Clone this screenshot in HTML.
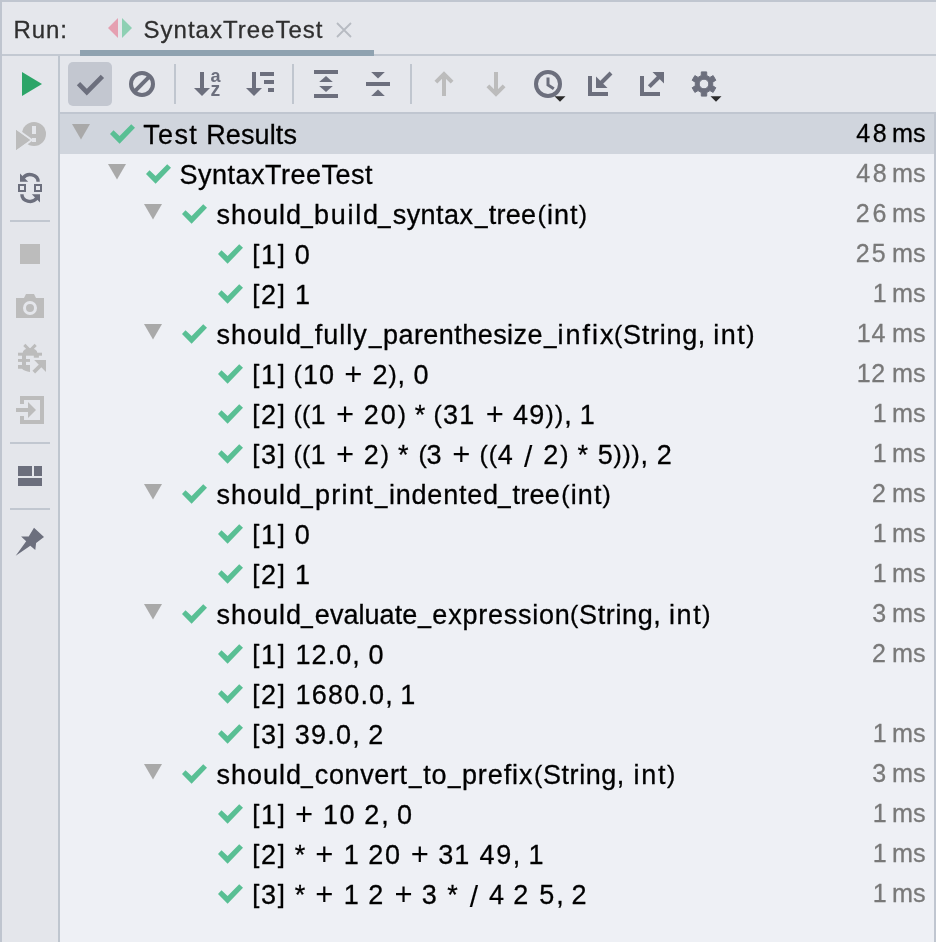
<!DOCTYPE html>
<html>
<head>
<meta charset="utf-8">
<title>Run - SyntaxTreeTest</title>
<style>
html,body{margin:0;padding:0;}
body{width:936px;height:942px;overflow:hidden;background:#eef0f5;font-family:"Liberation Sans",sans-serif;position:relative;font-size:0;line-height:0;color:transparent;}
.abs{position:absolute;}
#hdr{left:0;top:0;width:936px;height:56px;background:#e5e7ec;}
#tbar{left:60px;top:56px;width:876px;height:56px;background:#e5e7ec;}
#side{left:0;top:56px;width:58px;height:886px;background:#e4e6eb;}
#btop{left:0;top:0;width:936px;height:2px;background:#c0c6d0;}
#bleft{left:0;top:0;width:2px;height:942px;background:#bfc5cf;}
#bh1{left:0;top:54px;width:936px;height:2px;background:#c3c9d2;}
#bv1{left:58px;top:56px;width:2px;height:886px;background:#bfc6cf;}
#bh2{left:60px;top:112px;width:876px;height:2px;background:#c0c6d0;}
#bright{left:934px;top:112px;width:2px;height:830px;background:#c0c6d0;}
#tabul{left:80px;top:50px;width:294px;height:6px;background:#8fa2b0;}
#sel{left:60px;top:114px;width:874px;height:40px;background:#d0d5dd;}
.row,.tm{position:absolute;left:0;width:936px;height:40px;}
#txt{position:absolute;left:0;top:0;width:936px;height:942px;will-change:transform;}
.row span,.tm span{position:absolute;top:0;height:40px;white-space:pre;}
.row span{font-size:27px;line-height:42px;color:#000;}
.tm span{font-size:25px;line-height:38px;color:#797979;}
.tm.sel span{color:#000;}
.hd{position:absolute;left:0;top:9.6px;width:936px;height:40px;}
.hd span{position:absolute;top:0;height:40px;white-space:pre;font-size:24px;line-height:40px;color:#2f2f2f;}
.row span.u{top:-2px;}
.row span.p{font-size:31px;-webkit-text-stroke:0;}
.row span.s{font-size:30px;top:2px;-webkit-text-stroke:0.1px;}
.row i{font-style:normal;position:relative;}
.row i.q{font-size:24.8px;top:-1.2px;}
.row i.k{font-size:25.6px;top:-1.1px;}
.row span,.tm span,.hd span{-webkit-text-stroke:0.3px;}
svg{position:absolute;left:0;top:0;}
</style>
</head>
<body>
<div class="abs" id="hdr"></div>
<div class="abs" id="tbar"></div>
<div class="abs" id="side"></div>
<div class="abs" id="sel"></div>
<div class="abs" id="btop"></div>
<div class="abs" id="bh1"></div>
<div class="abs" id="bv1"></div>
<div class="abs" id="bh2"></div>
<div class="abs" id="bright"></div>
<div class="abs" id="bleft"></div>
<div class="abs" id="tabul"></div>

<div id="txt">

<!-- ROWS-BEGIN -->
<div class="hd"><span style="left:13.58px;letter-spacing:0.85px;">Run:</span><span style="left:143.58px;letter-spacing:1.0px;">SyntaxTreeTest</span></div>
<div class="row" style="top:114px"><span style="left:143.2px;letter-spacing:1.36px;">Test</span><span style="left:206.17px;letter-spacing:0.12px;">Results</span></div>
<div class="tm sel" style="top:114px"><span style="left:856.15px;letter-spacing:2.6px;">48</span><span style="left:891.99px;transform:scaleX(1.0078);transform-origin:0 0;">ms</span></div>
<div class="row" style="top:154px"><span style="left:179.42px;letter-spacing:0.5px;">SyntaxTreeTest</span></div>
<div class="tm" style="top:154px"><span style="left:856.15px;letter-spacing:2.6px;">48</span><span style="left:891.99px;transform:scaleX(1.0078);transform-origin:0 0;">ms</span></div>
<div class="row" style="top:194px"><span style="left:216.55px;letter-spacing:0.98px;">should</span><span class="u" style="left:301.48px;transform:scaleX(0.7864);transform-origin:0 0;">_</span><span style="left:314.08px;letter-spacing:1.73px;">build</span><span class="u" style="left:378.01px;transform:scaleX(0.836);transform-origin:0 0;">_</span><span style="left:392.75px;letter-spacing:0.43px;">syntax</span><span class="u" style="left:474.51px;transform:scaleX(0.836);transform-origin:0 0;">_</span><span style="left:488.75px;letter-spacing:0.24px;">tree</span><span style="left:537.6px;letter-spacing:1.07px;"><i class="q">(</i>int<i class="q">)</i></span></div>
<div class="tm" style="top:194px"><span style="left:855.86px;letter-spacing:2.7px;">26</span><span style="left:891.99px;transform:scaleX(1.0078);transform-origin:0 0;">ms</span></div>
<div class="row" style="top:234px"><span style="left:252.22px;letter-spacing:1.69px;"><i class="k">[</i>1<i class="k">]</i></span><span style="left:294.74px;">0</span></div>
<div class="tm" style="top:234px"><span style="left:855.86px;letter-spacing:1.87px;">25</span><span style="left:891.99px;transform:scaleX(1.0078);transform-origin:0 0;">ms</span></div>
<div class="row" style="top:274px"><span style="left:252.22px;letter-spacing:1.69px;"><i class="k">[</i>2<i class="k">]</i></span><span style="left:294.92px;">1</span></div>
<div class="tm" style="top:274px"><span style="left:872.86px;">1</span><span style="left:891.99px;transform:scaleX(1.0078);transform-origin:0 0;">ms</span></div>
<div class="row" style="top:314px"><span style="left:216.55px;letter-spacing:0.98px;">should</span><span class="u" style="left:301.48px;transform:scaleX(0.7864);transform-origin:0 0;">_</span><span style="left:314.77px;letter-spacing:0.97px;">fully</span><span class="u" style="left:369.01px;transform:scaleX(0.836);transform-origin:0 0;">_</span><span style="left:382.98px;letter-spacing:0.45px;">parenthesize</span><span class="u" style="left:543.51px;transform:scaleX(0.836);transform-origin:0 0;">_</span><span style="left:557.43px;letter-spacing:1.99px;">infix</span><span style="left:614.1px;letter-spacing:0.71px;"><i class="q">(</i>String,</span><span style="left:713.23px;letter-spacing:1.48px;">int<i class="q">)</i></span></div>
<div class="tm" style="top:314px"><span style="left:856.87px;letter-spacing:0.69px;">14</span><span style="left:891.99px;transform:scaleX(1.0078);transform-origin:0 0;">ms</span></div>
<div class="row" style="top:354px"><span style="left:252.22px;letter-spacing:1.69px;"><i class="k">[</i>1<i class="k">]</i></span><span style="left:293.6px;letter-spacing:1.09px;"><i class="q">(</i>10</span><span class="p" style="left:344.25px;">+</span><span style="left:372.58px;letter-spacing:0.78px;">2<i class="q">)</i>,</span><span style="left:413.59px;">0</span></div>
<div class="tm" style="top:354px"><span style="left:856.87px;letter-spacing:0.4px;">12</span><span style="left:891.99px;transform:scaleX(1.0078);transform-origin:0 0;">ms</span></div>
<div class="row" style="top:394px"><span style="left:252.22px;letter-spacing:1.69px;"><i class="k">[</i>2<i class="k">]</i></span><span style="left:293.6px;letter-spacing:0.22px;"><i class="q">(</i><i class="q">(</i>1</span><span class="p" style="left:335.95px;">+</span><span style="left:363.78px;letter-spacing:1.98px;">20<i class="q">)</i></span><span style="left:414.82px;">*</span><span style="left:433.6px;letter-spacing:1.22px;"><i class="q">(</i>31</span><span class="p" style="left:485.7px;">+</span><span style="left:513.09px;letter-spacing:1.17px;">49<i class="q">)</i><i class="q">)</i>,</span><span style="left:579.82px;">1</span></div>
<div class="tm" style="top:394px"><span style="left:872.86px;">1</span><span style="left:891.99px;transform:scaleX(1.0078);transform-origin:0 0;">ms</span></div>
<div class="row" style="top:434px"><span style="left:252.22px;letter-spacing:1.69px;"><i class="k">[</i>3<i class="k">]</i></span><span style="left:293.6px;letter-spacing:0.22px;"><i class="q">(</i><i class="q">(</i>1</span><span class="p" style="left:335.95px;">+</span><span style="left:363.78px;letter-spacing:1.95px;">2<i class="q">)</i></span><span style="left:398.07px;">*</span><span style="left:418.6px;letter-spacing:-0.29px;"><i class="q">(</i>3</span><span class="p" style="left:452.2px;">+</span><span style="left:479.6px;letter-spacing:0.78px;"><i class="q">(</i><i class="q">(</i>4</span><span class="s" style="left:524.05px;">/</span><span style="left:543.28px;letter-spacing:1.95px;">2<i class="q">)</i></span><span style="left:577.57px;">*</span><span style="left:597.8px;letter-spacing:0.7px;">5<i class="q">)</i><i class="q">)</i><i class="q">)</i>,</span><span style="left:656.75px;">2</span></div>
<div class="tm" style="top:434px"><span style="left:872.86px;">1</span><span style="left:891.99px;transform:scaleX(1.0078);transform-origin:0 0;">ms</span></div>
<div class="row" style="top:474px"><span style="left:216.55px;letter-spacing:0.98px;">should</span><span class="u" style="left:301.48px;transform:scaleX(0.7864);transform-origin:0 0;">_</span><span style="left:314.88px;letter-spacing:1.35px;">print</span><span class="u" style="left:374.7px;transform:scaleX(0.8236);transform-origin:0 0;">_</span><span style="left:389.03px;letter-spacing:0.77px;">indented</span><span class="u" style="left:498.22px;transform:scaleX(0.8422);transform-origin:0 0;">_</span><span style="left:512.45px;letter-spacing:0.24px;">tree</span><span style="left:561.3px;letter-spacing:1.12px;"><i class="q">(</i>int<i class="q">)</i></span></div>
<div class="tm" style="top:474px"><span style="left:872.12px;">2</span><span style="left:891.99px;transform:scaleX(1.0078);transform-origin:0 0;">ms</span></div>
<div class="row" style="top:514px"><span style="left:252.22px;letter-spacing:1.69px;"><i class="k">[</i>1<i class="k">]</i></span><span style="left:294.74px;">0</span></div>
<div class="tm" style="top:514px"><span style="left:872.86px;">1</span><span style="left:891.99px;transform:scaleX(1.0078);transform-origin:0 0;">ms</span></div>
<div class="row" style="top:554px"><span style="left:252.22px;letter-spacing:1.69px;"><i class="k">[</i>2<i class="k">]</i></span><span style="left:294.92px;">1</span></div>
<div class="tm" style="top:554px"><span style="left:872.86px;">1</span><span style="left:891.99px;transform:scaleX(1.0078);transform-origin:0 0;">ms</span></div>
<div class="row" style="top:594px"><span style="left:216.55px;letter-spacing:0.98px;">should</span><span class="u" style="left:301.48px;transform:scaleX(0.7864);transform-origin:0 0;">_</span><span style="left:314.87px;letter-spacing:0.04px;">evaluate</span><span class="u" style="left:418.03px;transform:scaleX(0.8669);transform-origin:0 0;">_</span><span style="left:432.37px;letter-spacing:0.75px;">expression</span><span style="left:570.1px;letter-spacing:0.64px;"><i class="q">(</i>String,</span><span style="left:668.93px;letter-spacing:1.62px;">int<i class="q">)</i></span></div>
<div class="tm" style="top:594px"><span style="left:872.27px;">3</span><span style="left:891.99px;transform:scaleX(1.0078);transform-origin:0 0;">ms</span></div>
<div class="row" style="top:634px"><span style="left:252.22px;letter-spacing:1.69px;"><i class="k">[</i>1<i class="k">]</i></span><span style="left:295.45px;letter-spacing:1.08px;">12.0,</span><span style="left:368.49px;">0</span></div>
<div class="tm" style="top:634px"><span style="left:872.12px;">2</span><span style="left:891.99px;transform:scaleX(1.0078);transform-origin:0 0;">ms</span></div>
<div class="row" style="top:674px"><span style="left:252.22px;letter-spacing:1.69px;"><i class="k">[</i>2<i class="k">]</i></span><span style="left:295.45px;letter-spacing:1.22px;">1680.0,</span><span style="left:400.32px;">1</span></div>
<div class="row" style="top:714px"><span style="left:252.22px;letter-spacing:1.69px;"><i class="k">[</i>3<i class="k">]</i></span><span style="left:294.81px;letter-spacing:1.24px;">39.0,</span><span style="left:368.25px;">2</span></div>
<div class="tm" style="top:714px"><span style="left:872.86px;">1</span><span style="left:891.99px;transform:scaleX(1.0078);transform-origin:0 0;">ms</span></div>
<div class="row" style="top:754px"><span style="left:216.55px;letter-spacing:0.98px;">should</span><span class="u" style="left:301.48px;transform:scaleX(0.7864);transform-origin:0 0;">_</span><span style="left:314.87px;letter-spacing:0.6px;">convert</span><span class="u" style="left:409.01px;transform:scaleX(0.836);transform-origin:0 0;">_</span><span style="left:423.25px;letter-spacing:0.72px;">to</span><span class="u" style="left:448.01px;transform:scaleX(0.836);transform-origin:0 0;">_</span><span style="left:461.98px;letter-spacing:0.88px;">prefix</span><span style="left:534.1px;letter-spacing:0.57px;"><i class="q">(</i>String,</span><span style="left:633.43px;letter-spacing:1.72px;">int<i class="q">)</i></span></div>
<div class="tm" style="top:754px"><span style="left:872.27px;">3</span><span style="left:891.99px;transform:scaleX(1.0078);transform-origin:0 0;">ms</span></div>
<div class="row" style="top:794px"><span style="left:252.22px;letter-spacing:1.69px;"><i class="k">[</i>1<i class="k">]</i></span><span class="p" style="left:294.95px;">+</span><span style="left:322.95px;letter-spacing:1.62px;">10</span><span style="left:364.28px;letter-spacing:1.93px;">2,</span><span style="left:396.99px;">0</span></div>
<div class="tm" style="top:794px"><span style="left:872.86px;">1</span><span style="left:891.99px;transform:scaleX(1.0078);transform-origin:0 0;">ms</span></div>
<div class="row" style="top:834px"><span style="left:252.22px;letter-spacing:1.69px;"><i class="k">[</i>2<i class="k">]</i></span><span style="left:294.82px;">*</span><span class="p" style="left:315.2px;">+</span><span style="left:343.82px;">1</span><span style="left:368.28px;letter-spacing:1.79px;">20</span><span class="p" style="left:410.7px;">+</span><span style="left:438.31px;letter-spacing:0.87px;">31</span><span style="left:479.59px;letter-spacing:1.56px;">49,</span><span style="left:528.57px;">1</span></div>
<div class="tm" style="top:834px"><span style="left:872.86px;">1</span><span style="left:891.99px;transform:scaleX(1.0078);transform-origin:0 0;">ms</span></div>
<div class="row" style="top:874px"><span style="left:252.22px;letter-spacing:1.69px;"><i class="k">[</i>3<i class="k">]</i></span><span style="left:294.82px;">*</span><span class="p" style="left:315.2px;">+</span><span style="left:343.82px;">1</span><span style="left:368.25px;">2</span><span class="p" style="left:394.45px;">+</span><span style="left:421.74px;">3</span><span style="left:447.32px;">*</span><span class="s" style="left:469.8px;">/</span><span style="left:489.06px;">4</span><span style="left:513.25px;">2</span><span style="left:539.3px;letter-spacing:1.91px;">5,</span><span style="left:571.5px;">2</span></div>
<div class="tm" style="top:874px"><span style="left:872.86px;">1</span><span style="left:891.99px;transform:scaleX(1.0078);transform-origin:0 0;">ms</span></div>
<!-- ROWS-END -->
</div>

<svg id="icons" width="936" height="942" viewBox="0 0 936 942">
<!-- ICONS-BEGIN -->
<polygon points="108,28 118,18 118,38" fill="#e5a0b1"/>
<polygon points="122,18 122,38 132,28" fill="#8ed0b3"/>
<path d="M337,23 L351,37 M351,23 L337,37" stroke="#b7bbc2" stroke-width="1.8" fill="none"/>
<rect x="68" y="62" width="44" height="44" rx="5" ry="5" fill="#c3c7d0"/>
<polyline points="78.5,83.7 86.8,92.1 102.4,76.4" fill="none" stroke="#6c6f7d" stroke-width="4.7"/>
<circle cx="142" cy="84" r="11" fill="none" stroke="#6c6f7d" stroke-width="4"/>
<line x1="134.2" y1="91.8" x2="149.8" y2="76.2" stroke="#6c6f7d" stroke-width="4"/>
<rect x="174" y="64" width="2" height="40" fill="#c0c6cf"/>
<rect x="292" y="64" width="2" height="40" fill="#c0c6cf"/>
<rect x="410" y="64" width="2" height="40" fill="#c0c6cf"/>
<rect x="200" y="72" width="4" height="16" fill="#6c6f7d"/><polygon points="194,88 210,88 202,96" fill="#6c6f7d"/>
<text x="210.4" y="81.7" font-family="Liberation Sans, sans-serif" font-weight="bold" font-size="18" fill="#6c6f7d">a</text>
<text x="210.6" y="96" font-family="Liberation Sans, sans-serif" font-weight="bold" font-size="19.5" fill="#6c6f7d">z</text>
<rect x="252" y="72" width="4" height="16" fill="#6c6f7d"/><polygon points="246,88 262,88 254,96" fill="#6c6f7d"/>
<rect x="260" y="72" width="14" height="4" fill="#6c6f7d"/><rect x="264" y="80" width="10" height="4" fill="#6c6f7d"/><rect x="268" y="88" width="6" height="4" fill="#6c6f7d"/>
<rect x="314" y="70" width="24" height="4" fill="#6c6f7d"/><rect x="314" y="94" width="24" height="4" fill="#6c6f7d"/>
<polygon points="326,76 319.2,82 332.8,82" fill="#6c6f7d"/><polygon points="319.2,86 332.8,86 326,92" fill="#6c6f7d"/>
<rect x="366" y="82" width="24" height="4" fill="#6c6f7d"/>
<polygon points="371.2,72 384.8,72 378,78.4" fill="#6c6f7d"/><polygon points="378,89.6 371.2,96 384.8,96" fill="#6c6f7d"/>
<rect x="442" y="74" width="4" height="22" fill="#bcbcbc"/><polyline points="435.9,82.1 444,74 452.1,82.1" fill="none" stroke="#bcbcbc" stroke-width="4"/>
<rect x="494" y="72" width="4" height="22" fill="#bcbcbc"/><polyline points="487.9,85.9 496,94 504.1,85.9" fill="none" stroke="#bcbcbc" stroke-width="4"/>
<circle cx="548" cy="84" r="12" fill="none" stroke="#6c6f7d" stroke-width="4"/>
<polyline points="548,77.5 548,85 553.8,88.8" fill="none" stroke="#6c6f7d" stroke-width="3"/>
<polygon points="554.5,96.3 565.5,96.3 560,101.8" fill="#2b2b2b"/>
<polygon points="588,76 592,76 592,92 608,92 608,96 588,96" fill="#6c6f7d"/>
<polygon points="596,88 596,76.5 607.5,88" fill="#6c6f7d"/><line x1="601" y1="83" x2="611" y2="73" stroke="#6c6f7d" stroke-width="4"/>
<polygon points="640,76 644,76 644,92 660,92 660,96 640,96" fill="#6c6f7d"/>
<polygon points="664,72 652.5,72 664,83.5" fill="#6c6f7d"/><line x1="659" y1="77" x2="649.3" y2="86.7" stroke="#6c6f7d" stroke-width="4"/>
<path d="M701.25,75.54 L701.32,71.89 L706.68,71.89 L706.75,75.54 L709.96,77.39 L713.14,75.62 L715.83,80.27 L712.71,82.15 L712.71,85.85 L715.83,87.73 L713.14,92.38 L709.96,90.61 L706.75,92.46 L706.68,96.11 L701.32,96.11 L701.25,92.46 L698.04,90.61 L694.86,92.38 L692.17,87.73 L695.29,85.85 L695.29,82.15 L692.17,80.27 L694.86,75.62 L698.04,77.39 Z M708.8,84 A4.8,4.8 0 1 0 699.2,84 A4.8,4.8 0 1 0 708.8,84 Z" fill="#6c6f7d" fill-rule="evenodd" stroke="#6c6f7d" stroke-width="1" stroke-linejoin="round"/>
<polygon points="710.5,96.3 721.5,96.3 716,101.8" fill="#2b2b2b"/>
<polygon points="22,72 22,96 42,84" fill="#2ca568"/>
<circle cx="34" cy="134" r="12" fill="#bcbcbc"/>
<rect x="32" y="126" width="4" height="8" fill="#e4e6eb"/><rect x="32" y="138" width="4" height="4" fill="#e4e6eb"/>
<polygon points="16,130 16,150 30,140" fill="#bcbcbc" stroke="#e4e6eb" stroke-width="4" paint-order="stroke"/>
<polygon points="16,130 16,150 30,140" fill="#bcbcbc"/>
<rect x="19" y="185" width="6" height="6" fill="none" stroke="#6c6f7d" stroke-width="2"/><rect x="35" y="185" width="6" height="6" fill="none" stroke="#6c6f7d" stroke-width="2"/>
<path d="M38.1,181.8 A8.1,7.1 0 0 0 23.2,177.9" fill="none" stroke="#6c6f7d" stroke-width="3.4"/><polygon points="20,173.6 20,181.8 28.2,181.8" fill="#6c6f7d"/>
<path d="M21.9,194.2 A8.1,7.1 0 0 0 36.8,198.1" fill="none" stroke="#6c6f7d" stroke-width="3.4"/><polygon points="40,202.4 40,194.2 31.8,194.2" fill="#6c6f7d"/>
<rect x="10" y="220" width="40" height="2" fill="#c1c7d0"/>
<rect x="10" y="442" width="40" height="2" fill="#c1c7d0"/>
<rect x="10" y="508" width="40" height="2" fill="#c1c7d0"/>
<rect x="20" y="244" width="20" height="20" fill="#bcbcbc"/>
<path d="M16,298 L24,298 L26,294 L34,294 L36,298 L44,298 L44,318 L16,318 Z" fill="#bcbcbc"/>
<circle cx="30" cy="308" r="5.5" fill="none" stroke="#e4e6eb" stroke-width="3"/>
<path d="M24.3,344.9 L30,350.6 M35.7,344.9 L30,350.6" stroke="#bcbcbc" stroke-width="3" fill="none"/>
<path d="M22.7,354 L22.7,352.8 A7.3,4.6 0 0 1 37.3,352.8 L37.3,354 Z" fill="#bcbcbc"/>
<rect x="18" y="352.7" width="24" height="3" fill="#bcbcbc"/>
<rect x="33.8" y="354.5" width="5.1" height="3.2" fill="#bcbcbc"/>
<rect x="22" y="354.5" width="4" height="11.5" fill="#bcbcbc"/>
<rect x="18" y="359" width="12" height="2.9" fill="#bcbcbc"/>
<path d="M18,365 L30,365 L30,371.9 Q24.5,371.4 22,368.8 L18,368.8 Z" fill="#bcbcbc"/>
<polygon points="34.2,360 46,360 46,372" fill="#bcbcbc"/><line x1="41" y1="365" x2="33.8" y2="372.2" stroke="#bcbcbc" stroke-width="3.8"/>
<path d="M20,404 L20,396 L44,396 L44,424 L20,424 L20,416 L24,416 L24,420 L40,420 L40,400 L24,400 L24,404 Z" fill="#bcbcbc"/>
<rect x="16" y="408" width="12.5" height="4" fill="#bcbcbc"/><polygon points="28,402 28,418 36,410" fill="#bcbcbc"/>
<rect x="18" y="466" width="14" height="10" fill="#6c6f7d"/><rect x="34" y="466" width="8" height="10" fill="#6c6f7d"/><rect x="18" y="478" width="24" height="8" fill="#6c6f7d"/>
<path d="M34,527.7 L44,537 L36.1,543 L35.3,550 L30.3,545.8 L15.7,555.7 L26.2,541.2 L21.1,536.4 L28.7,536.4 Z" fill="#6c6f7d"/>
<path transform="translate(110,114)" d="M0,20 L9.6,29.7 L25,13.8 L21.2,10.3 L9.6,22 L3.5,16.2 Z" fill="#59bf94"/>
<polygon points="72,124 90,124 81,139.5" fill="#a9a9a9"/>
<path transform="translate(146,154)" d="M0,20 L9.6,29.7 L25,13.8 L21.2,10.3 L9.6,22 L3.5,16.2 Z" fill="#59bf94"/>
<polygon points="108,164 126,164 117,179.5" fill="#a9a9a9"/>
<path transform="translate(182,194)" d="M0,20 L9.6,29.7 L25,13.8 L21.2,10.3 L9.6,22 L3.5,16.2 Z" fill="#59bf94"/>
<polygon points="144,204 162,204 153,219.5" fill="#a9a9a9"/>
<path transform="translate(218,234)" d="M0,20 L9.6,29.7 L25,13.8 L21.2,10.3 L9.6,22 L3.5,16.2 Z" fill="#59bf94"/>
<path transform="translate(218,274)" d="M0,20 L9.6,29.7 L25,13.8 L21.2,10.3 L9.6,22 L3.5,16.2 Z" fill="#59bf94"/>
<path transform="translate(182,314)" d="M0,20 L9.6,29.7 L25,13.8 L21.2,10.3 L9.6,22 L3.5,16.2 Z" fill="#59bf94"/>
<polygon points="144,324 162,324 153,339.5" fill="#a9a9a9"/>
<path transform="translate(218,354)" d="M0,20 L9.6,29.7 L25,13.8 L21.2,10.3 L9.6,22 L3.5,16.2 Z" fill="#59bf94"/>
<path transform="translate(218,394)" d="M0,20 L9.6,29.7 L25,13.8 L21.2,10.3 L9.6,22 L3.5,16.2 Z" fill="#59bf94"/>
<path transform="translate(218,434)" d="M0,20 L9.6,29.7 L25,13.8 L21.2,10.3 L9.6,22 L3.5,16.2 Z" fill="#59bf94"/>
<path transform="translate(182,474)" d="M0,20 L9.6,29.7 L25,13.8 L21.2,10.3 L9.6,22 L3.5,16.2 Z" fill="#59bf94"/>
<polygon points="144,484 162,484 153,499.5" fill="#a9a9a9"/>
<path transform="translate(218,514)" d="M0,20 L9.6,29.7 L25,13.8 L21.2,10.3 L9.6,22 L3.5,16.2 Z" fill="#59bf94"/>
<path transform="translate(218,554)" d="M0,20 L9.6,29.7 L25,13.8 L21.2,10.3 L9.6,22 L3.5,16.2 Z" fill="#59bf94"/>
<path transform="translate(182,594)" d="M0,20 L9.6,29.7 L25,13.8 L21.2,10.3 L9.6,22 L3.5,16.2 Z" fill="#59bf94"/>
<polygon points="144,604 162,604 153,619.5" fill="#a9a9a9"/>
<path transform="translate(218,634)" d="M0,20 L9.6,29.7 L25,13.8 L21.2,10.3 L9.6,22 L3.5,16.2 Z" fill="#59bf94"/>
<path transform="translate(218,674)" d="M0,20 L9.6,29.7 L25,13.8 L21.2,10.3 L9.6,22 L3.5,16.2 Z" fill="#59bf94"/>
<path transform="translate(218,714)" d="M0,20 L9.6,29.7 L25,13.8 L21.2,10.3 L9.6,22 L3.5,16.2 Z" fill="#59bf94"/>
<path transform="translate(182,754)" d="M0,20 L9.6,29.7 L25,13.8 L21.2,10.3 L9.6,22 L3.5,16.2 Z" fill="#59bf94"/>
<polygon points="144,764 162,764 153,779.5" fill="#a9a9a9"/>
<path transform="translate(218,794)" d="M0,20 L9.6,29.7 L25,13.8 L21.2,10.3 L9.6,22 L3.5,16.2 Z" fill="#59bf94"/>
<path transform="translate(218,834)" d="M0,20 L9.6,29.7 L25,13.8 L21.2,10.3 L9.6,22 L3.5,16.2 Z" fill="#59bf94"/>
<path transform="translate(218,874)" d="M0,20 L9.6,29.7 L25,13.8 L21.2,10.3 L9.6,22 L3.5,16.2 Z" fill="#59bf94"/>
<!-- ICONS-END -->
</svg>
</body>
</html>
